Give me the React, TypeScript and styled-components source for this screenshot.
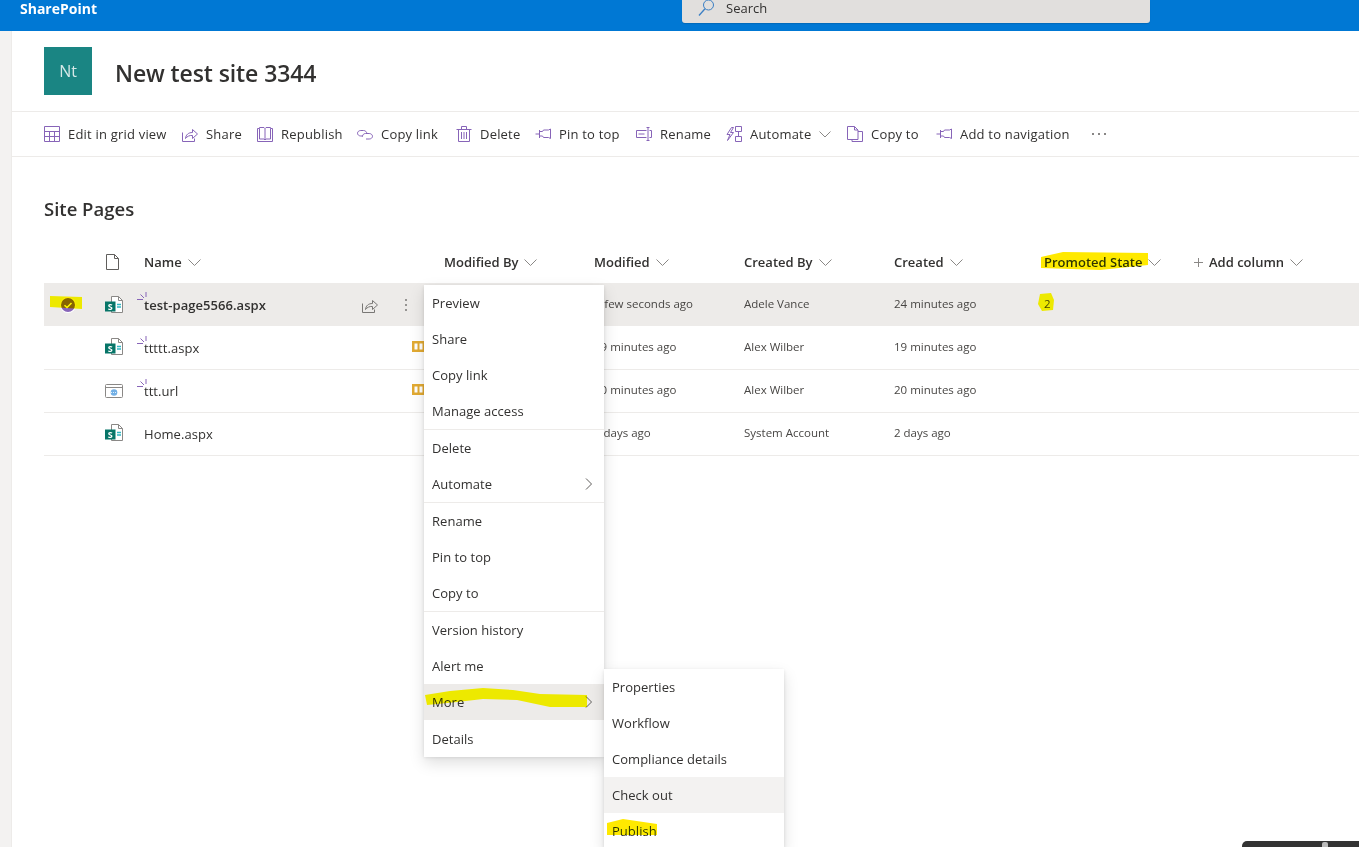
import React from "react";
import styled, { createGlobalStyle } from "styled-components";

const Global = createGlobalStyle`
  html, body { margin: 0; padding: 0; background: #fff; }
  body { font-family: "Open Sans", "Noto Sans", sans-serif; color: #323130; }
`;

const Page = styled.div`
  position: relative;
  width: 1359px;
  height: 847px;
  overflow: hidden;
  background: #fff;
`;

const TopBar = styled.header`
  height: 31px;
  background: #0078d4;
  display: flex;
  align-items: flex-start;
  padding-left: 20px;
`;
const Brand = styled.div`
  width: 662px;
  color: #fff;
  font-size: 14px;
  font-weight: 700;
  line-height: 15px;
  padding-top: 1px;
`;
const SearchBox = styled.div`
  width: 468px;
  height: 23px;
  background: #e1dfdd;
  border-radius: 0 0 3px 3px;
  box-shadow: 0 1px 1px rgba(0, 0, 0, 0.12);
  display: flex;
  align-items: flex-start;
  gap: 11px;
  padding-left: 16px;
  font-size: 13px;
  line-height: 16px;
  box-sizing: border-box;
`;
const SearchIcon = styled.svg`
  width: 17px;
  height: 17px;
  flex: none;
`;

const Body = styled.div`
  display: flex;
  height: 816px;
`;
const Rail = styled.div`
  width: 11px;
  flex: none;
  background: #f3f2f1;
  border-right: 1px solid #edebe9;
`;
const Main = styled.main`
  flex: 1;
  min-width: 0;
`;

const SiteHeader = styled.div`
  height: 80px;
  border-bottom: 1px solid #edebe9;
  display: flex;
  align-items: center;
  padding-left: 32px;
  gap: 23px;
`;
const SiteLogo = styled.div`
  width: 48px;
  height: 48px;
  background: #1a8583;
  color: #d5e8e7;
  font-size: 16px;
  display: flex;
  align-items: center;
  justify-content: center;
`;
const SiteTitle = styled.h1`
  margin: 4px 0 0;
  font-size: 23px;
  font-weight: 600;
  letter-spacing: -0.1px;
  color: #323130;
`;

const CommandBar = styled.div`
  height: 44px;
  border-bottom: 1px solid #edebe9;
  display: flex;
  align-items: center;
  padding-left: 32px;
`;
const Command = styled.div<{ $w: number }>`
  width: ${(p) => p.$w}px;
  flex: none;
  display: flex;
  align-items: center;
  gap: 8px;
  font-size: 13px;
  letter-spacing: 0.2px;
  color: #323130;
  white-space: nowrap;
`;
const CmdIcon = styled.svg`
  width: 16px;
  height: 16px;
  flex: none;
  fill: none;
  stroke: #8764b8;
  stroke-width: 1;
`;
const CmdChevron = styled.svg`
  width: 12px;
  height: 12px;
  flex: none;
  fill: none;
  stroke: #8a8886;
`;
const MoreDots = styled.svg`
  width: 16px;
  height: 4px;
  flex: none;
  fill: #605e5c;
  margin-left: 21px;
`;

const ListSection = styled.section`
  padding: 38px 0 0 32px;
`;
const ListTitle = styled.h2`
  margin: 0 0 18px;
  font-size: 18.5px;
  line-height: 28px;
  font-weight: 600;
  color: #323130;
`;

const Columns = "60px 40px 300px 150px 150px 150px 150px 150px 1fr";
const HeadRow = styled.div`
  display: grid;
  grid-template-columns: ${Columns};
  height: 42px;
  align-items: center;
  font-size: 13px;
  font-weight: 600;
  color: #323130;
`;
const HeadCell = styled.div`
  display: flex;
  align-items: center;
  gap: 6px;
  white-space: nowrap;
`;
const SmallChevron = styled.svg`
  width: 13px;
  height: 13px;
  fill: none;
  stroke: #8a8886;
  flex: none;
`;
const PlusIcon = styled.svg`
  width: 9px;
  height: 9px;
  fill: none;
  stroke: #8a8886;
  flex: none;
`;
const Row = styled.div<{ $selected?: boolean }>`
  display: grid;
  grid-template-columns: ${Columns};
  height: 43px;
  align-items: center;
  box-sizing: border-box;
  margin-bottom: ${(p) => (p.$selected ? "1px" : "0")};
  padding-bottom: ${(p) => (p.$selected ? "0" : "2px")};
  background: ${(p) => (p.$selected ? "#edebe9" : "#fff")};
  border-bottom: ${(p) => (p.$selected ? "none" : "1px solid #edebe9")};
`;
const CheckCell = styled.div`
  display: flex;
  justify-content: flex-start;
  padding-left: 16px;
`;
const NameCell = styled.div`
  display: flex;
  align-items: center;
  position: relative;
  font-size: 13px;
  height: 100%;
  padding-right: 18px;
  box-sizing: border-box;
`;
const FileName = styled.span<{ $bold?: boolean }>`
  font-weight: ${(p) => (p.$bold ? 600 : 400)};
  margin-top: ${(p) => (p.$bold ? "0" : "2px")};
  letter-spacing: 0.05px;
`;
const Spacer = styled.div`
  flex: 1;
`;
const NewMark = styled.svg`
  position: absolute;
  left: -7px;
  top: 9px;
  width: 10px;
  height: 9px;
  fill: none;
  stroke: #8764b8;
`;
const RowAction = styled.svg`
  width: 16px;
  height: 16px;
  flex: none;
  fill: none;
  stroke: #797775;
`;
const KebabIcon = styled.svg`
  width: 16px;
  height: 16px;
  flex: none;
  fill: #797775;
  margin-left: 20px;
  margin-right: 12px;
`;
const MetaCell = styled.div`
  font-size: 11.5px;
  color: #484644;
  white-space: nowrap;
  margin-bottom: 2px;
`;
const FileIconBox = styled.svg`
  display: block;
  width: 20px;
  height: 20px;
`;
const HeadFileIcon = styled(FileIconBox)`
  margin-left: -1px;
`;

const ContextMenu = styled.div`
  position: absolute;
  left: 424px;
  top: 285px;
  width: 180px;
  background: #fff;
  box-shadow: 0 6.4px 14.4px rgba(0, 0, 0, 0.13), 0 1.2px 3.6px rgba(0, 0, 0, 0.11);
`;
const SubMenu = styled(ContextMenu)`
  left: 180px;
  top: 384px;
`;
const MenuItem = styled.div<{ $tone?: string; $tall?: boolean }>`
  height: ${(p) => (p.$tall ? 37 : 36)}px;
  display: flex;
  align-items: center;
  justify-content: space-between;
  padding: ${(p) => (p.$tall ? "1px" : "0")} 10px 0 8px;
  box-sizing: border-box;
  font-size: 13px;
  letter-spacing: 0.03px;
  color: #323130;
  background: ${(p) => p.$tone ?? "transparent"};
`;
const Divider = styled.div`
  height: 1px;
  background: #edebe9;
`;
const MenuChevron = styled.svg`
  width: 10px;
  height: 14px;
  fill: none;
  stroke: #605e5c;
`;

const Ink = styled.svg`
  position: absolute;
  inset: 0;
  width: 1359px;
  height: 847px;
  mix-blend-mode: darken;
  pointer-events: none;
`;
const Tray = styled.div`
  position: absolute;
  left: 1242px;
  top: 841px;
  width: 117px;
  height: 6px;
  background: #333;
  border-radius: 5px 0 0 0;
`;
const TrayDot = styled.div`
  position: absolute;
  left: 80px;
  top: 1px;
  width: 6px;
  height: 5px;
  background: #bbb;
  border-radius: 2px 2px 0 0;
`;

const Chevron = () => (
  <SmallChevron viewBox="0 0 13 13">
    <path d="M.5 3.5 6.500 9.500l6-6" />
  </SmallChevron>
);

const icons: Record<string, React.ReactNode> = {
  grid: <path d="M.5.5h15v15H.5zM.5 5.5h15M.5 10.5h15M5.5 5.500v10M10.500 5.500v10" />,
  share: <path d="M.5 6.500v9h12v-3M3.500 12.500c.5-4 3-6 7-6v-3l5 4.500-5 4.500v-3c-3-.4-5.500 1-7 3z" />,
  book: <path d="M.5 2.500h2v-1h4.500l1 1 1-1h4.500v1h2v13H.5zM2.500 2.500v10.500h4.500l1 1 1-1h4.500V2.500M8 2.500v11" />,
  link: <path d="M6.500 4.500H3.800C2 4.500.5 5.700.5 7.200s1.500 2.800 3.300 2.800H6M5.500 10.500c0-1.700 1.300-3 3-3h3.700c1.800 0 3.300 1.300 3.300 2.800s-1.500 2.700-3.300 2.700H9M6.500 4.500c1.800 0 3 1.200 3.500 3" />,
  trash: <path d="M2.500 3.500v12h11v-12M.5 3.500h15M5.500 3.500v-3h5v3M5.500 6v7M8 6v7M10.500 6v7" />,
  pin: <path d="M.5 8h4M4.500 4v8M4.500 5.500h3l1-1.500h5l2-1v9.500l-2-1h-5l-1-1.500h-3" />,
  rename: <path d="M10.500 4.500H.5v7h10M2.500 8h6M10.500 1.500h3M12 1.500v13M10.500 14.500h3M13.500 4.500h2v7h-2" />,
  automate: <path d="M5.500 1.500 1 8.500h3l-2.500 6 6-8H4.500l3-5zM9.500.5h6v5h-6zM12.500 5.500v5M9.500 10.500h6v5h-6z" />,
  copy: <path d="M.5.500h7l3.500 3.500v9.500H.5zM7.500.5v3.500h3.500M11 5.500h4.500v10H5v-2" />
};

const commands = [
  { label: "Edit in grid view", icon: "grid", w: 138 },
  { label: "Share", icon: "share", w: 75 },
  { label: "Republish", icon: "book", w: 100 },
  { label: "Copy link", icon: "link", w: 99 },
  { label: "Delete", icon: "trash", w: 79 },
  { label: "Pin to top", icon: "pin", w: 101 },
  { label: "Rename", icon: "rename", w: 90 },
  { label: "Automate", icon: "automate", w: 121, chevron: true },
  { label: "Copy to", icon: "copy", w: 89 },
  { label: "Add to navigation", icon: "pin", w: 134 }
];

const PageFile = () => (
  <FileIconBox viewBox="0 0 20 20">
    <path d="M7.500 1.500h7l4 4v12h-11z" fill="#fff" stroke="#8a8886" />
    <path d="M14.500 1.500v4h4" fill="none" stroke="#8a8886" />
    <rect x="1" y="6.500" width="10.500" height="10" fill="#077568" />
    <text x="6.250" y="14.500" textAnchor="middle" fontSize="9" fontWeight="700" fill="#fff" fontFamily="Open Sans">S</text>
    <path d="M13 9.500h4M13 12h4" stroke="#30b8c4" strokeWidth="1.300" />
  </FileIconBox>
);
const LinkFile = () => (
  <FileIconBox viewBox="0 0 20 20">
    <rect x="1.500" y="4.500" width="17" height="13" rx="1" fill="#fff" stroke="#8a8886" />
    <path d="M1.500 7.500h17" stroke="#8a8886" />
    <circle cx="10" cy="12.500" r="3.300" fill="#71afe5" />
    <path d="M7 12.500h6" stroke="#fff" strokeWidth=".8" strokeDasharray="1 1" />
  </FileIconBox>
);
const Mark = () => (
  <NewMark viewBox="0 0 10 9">
    <path d="M0 7.500h6M3.500 2.500 7 6M9 0v5" />
  </NewMark>
);
const Published = styled.svg`
  width: 14px;
  height: 11px;
  flex: none;
  margin-top: -1px;
`;
const BookBadge = () => (
  <Published viewBox="0 0 14 11">
    <rect x="0" y="0" width="14" height="11" fill="#e2aa32" />
    <path d="M2.500 2.500h3v6h-3zM7.500 2.500h3v6h-3z" fill="#fff" />
  </Published>
);

const headers = ["Modified By", "Modified", "Created By", "Created", "Promoted State"];

const rows = [
  { name: "test-page5566.aspx", file: "page", mark: true, selected: true, modified: "A few seconds ago", createdBy: "Adele Vance", created: "24 minutes ago", state: "2" },
  { name: "ttttt.aspx", file: "page", mark: true, book: true, modified: "19 minutes ago", createdBy: "Alex Wilber", created: "19 minutes ago" },
  { name: "ttt.url", file: "link", mark: true, book: true, modified: "20 minutes ago", createdBy: "Alex Wilber", created: "20 minutes ago" },
  { name: "Home.aspx", file: "page", modified: "2 days ago", createdBy: "System Account", created: "2 days ago" }
];

const menuGroups = [
  ["Preview", "Share", "Copy link", "Manage access"],
  ["Delete", "Automate"],
  ["Rename", "Pin to top", "Copy to"],
  ["Version history", "Alert me", "More", "Details"]
];
const subItems = ["Properties", "Workflow", "Compliance details", "Check out", "Publish"];

export default function App() {
  return (
    <Page>
      <Global />
      <TopBar>
        <Brand>SharePoint</Brand>
        <SearchBox>
          <SearchIcon viewBox="0 0 17 17" fill="none" stroke="#3b7fc4">
            <circle cx="10.500" cy="5" r="5" />
            <path d="M7 8.800 1 15.500" strokeWidth="1.300" />
          </SearchIcon>
          <span>Search</span>
        </SearchBox>
      </TopBar>
      <Body>
        <Rail />
        <Main>
          <SiteHeader>
            <SiteLogo>Nt</SiteLogo>
            <SiteTitle>New test site 3344</SiteTitle>
          </SiteHeader>
          <CommandBar>
            {commands.map((c) => (
              <Command key={c.label} $w={c.w}>
                <CmdIcon viewBox="0 0 16 16">{icons[c.icon]}</CmdIcon>
                <span>{c.label}</span>
                {c.chevron && (
                  <CmdChevron viewBox="0 0 12 12">
                    <path d="M.500 3.500 6 9l5.500-5.500" />
                  </CmdChevron>
                )}
              </Command>
            ))}
            <MoreDots viewBox="0 0 16 4">
              <circle cx="2" cy="2" r="1" />
              <circle cx="8" cy="2" r="1" />
              <circle cx="14" cy="2" r="1" />
            </MoreDots>
          </CommandBar>
          <ListSection>
            <ListTitle>Site Pages</ListTitle>
            <HeadRow>
              <div />
              <div>
                <HeadFileIcon viewBox="0 0 20 20">
                  <path d="M3.500 2.500h8l4 4v11h-12zM11.500 2.500v4h4" fill="#fff" stroke="#605e5c" />
                </HeadFileIcon>
              </div>
              <HeadCell>
                Name <Chevron />
              </HeadCell>
              {headers.map((h) => (
                <HeadCell key={h}>
                  {h} <Chevron />
                </HeadCell>
              ))}
              <HeadCell>
                <PlusIcon viewBox="0 0 9 9">
                  <path d="M0 4.500h9M4.500 0v9" />
                </PlusIcon>
                Add column <Chevron />
              </HeadCell>
            </HeadRow>
            {rows.map((r) => (
              <Row key={r.name} $selected={r.selected}>
                <CheckCell>
                  {r.selected && (
                    <svg width="16" height="16" viewBox="0 0 16 16">
                      <circle cx="8" cy="8" r="8" fill="#fff" />
                      <circle cx="8" cy="8" r="7" fill="#8764b8" />
                      <path d="M4.500 8.200 7 10.500l4.500-4.500" fill="none" stroke="#fff" strokeWidth="1.500" />
                    </svg>
                  )}
                </CheckCell>
                <div>{r.file === "page" ? <PageFile /> : <LinkFile />}</div>
                <NameCell>
                  {r.mark && <Mark />}
                  <FileName $bold={r.selected}>{r.name}</FileName>
                  <Spacer />
                  {r.selected && (
                    <>
                      <RowAction viewBox="0 0 16 16">{icons.share}</RowAction>
                      <KebabIcon viewBox="0 0 16 16">
                        <circle cx="8" cy="3" r="1" />
                        <circle cx="8" cy="8" r="1" />
                        <circle cx="8" cy="13" r="1" />
                      </KebabIcon>
                    </>
                  )}
                  {r.book && <BookBadge />}
                </NameCell>
                <MetaCell />
                <MetaCell>{r.modified}</MetaCell>
                <MetaCell>{r.createdBy}</MetaCell>
                <MetaCell>{r.created}</MetaCell>
                <MetaCell>{r.state}</MetaCell>
                <div />
              </Row>
            ))}
          </ListSection>
        </Main>
      </Body>

      <ContextMenu>
        {menuGroups.map((group, i) => (
          <React.Fragment key={group[0]}>
            {i > 0 && <Divider />}
            {group.map((item) => (
              <MenuItem key={item} $tall={item === "Details"} $tone={item === "More" ? "#edebe9" : undefined}>
                {item}
                {(item === "Automate" || item === "More") && (
                  <MenuChevron viewBox="0 0 10 14">
                    <path d="M2 1.500 7.500 7 2 12.500" />
                  </MenuChevron>
                )}
              </MenuItem>
            ))}
          </React.Fragment>
        ))}
        <SubMenu>
          {subItems.map((item) => (
            <MenuItem key={item} $tone={item === "Check out" ? "#f3f2f1" : undefined}>
              {item}
            </MenuItem>
          ))}
        </SubMenu>
      </ContextMenu>

      <Ink viewBox="0 0 1359 847" fill="#ffe900">
        <path d="M50 296 82 297 82 309 50 307z" />
        <path d="M1041 257 1063 252 1148 253 1148 265 1100 270 1041 268z" />
        <path d="M1040 294 1051 293 1054 300 1053 310 1042 311 1038 304z" />
        <path d="M425 695 450 691 483 688 513 690 540 694 587 695 587 707 550 707 517 700 483 699 457 702 427 705z" />
        <path d="M607 823 623 819 657 824 657 835 607 835z" />
      </Ink>
      <Tray>
        <TrayDot />
      </Tray>
    </Page>
  );
}
